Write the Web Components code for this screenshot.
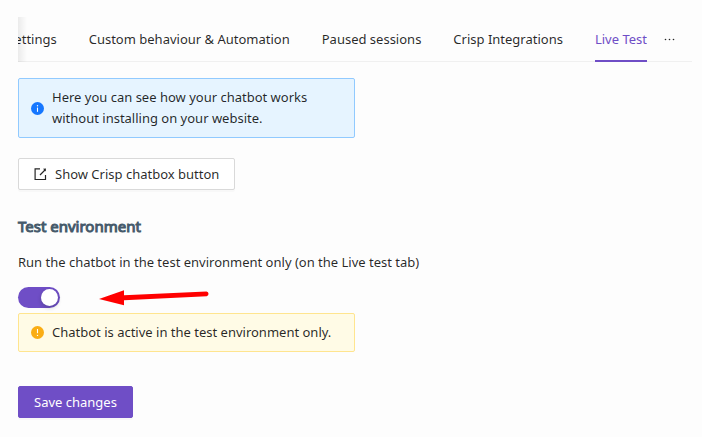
<!DOCTYPE html>
<html lang="en">
<head>
<meta charset="utf-8">
<title>Chatbot settings</title>
<style>
  body { margin: 0; background: #fdfdfd; color: rgba(0,0,0,.85); font: 13px/21px "Noto Sans", "Open Sans", sans-serif; }
</style>
</head>
<body>
<live-test-page></live-test-page>
<script>
class BaseElement extends HTMLElement {
  connectedCallback() {
    if (this.shadowRoot) return;
    this.attachShadow({ mode: 'open' }).innerHTML = this.render();
  }
}

customElements.define('tab-item', class extends BaseElement {
  render() {
    const on = this.hasAttribute('active');
    return `<style>
      :host { display: block; flex: none; }
      button { all: unset; display: block; box-sizing: border-box; height: 45px; padding: 12px 0; line-height: 21px; white-space: nowrap; cursor: pointer; }
      button[aria-selected="true"] { color: #6f4ec6; border-bottom: 2px solid #6f4ec6; }
    </style><button role="tab" aria-selected="${on}"><slot></slot></button>`;
  }
});

customElements.define('tab-bar', class extends BaseElement {
  render() {
    return `<style>
      :host { display: flex; position: relative; background: linear-gradient(#f0f0f0,#f0f0f0) bottom / 100% 1px no-repeat; }
      .list { display: flex; flex: 1; min-width: 0; justify-content: flex-end; gap: 32px; overflow: hidden; }
      .list::before { content: ""; position: absolute; left: 0; top: 0; bottom: 0; width: 9px; background: linear-gradient(to right, rgba(0,0,0,.07), rgba(0,0,0,0)); }
      .more { all: unset; box-sizing: border-box; width: 45px; padding-left: 16px; display: flex; align-items: center; cursor: pointer; }
      svg { display: block; }
    </style>
    <div class="list" role="tablist"><slot></slot></div>
    <button class="more" aria-label="More tabs"><svg width="13" height="13" viewBox="0 0 13 13" fill="#262626"><circle cx="2.500" cy="6.5" r=".8"/><circle cx="6.5" cy="6.5" r=".8"/><circle cx="10.500" cy="6.5" r=".8"/></svg></button>`;
  }
});

customElements.define('alert-box', class extends BaseElement {
  render() {
    const warn = this.getAttribute('type') === 'warning';
    const mark = warn
      ? '<path d="M6.5 3v4.2" stroke="#fff" stroke-width="1.1"/><circle cx="6.5" cy="9.4" r=".7" fill="#fff"/>'
      : '<path d="M6.5 5.6v4.2" stroke="#fff" stroke-width="1.1"/><circle cx="6.5" cy="3.7" r=".7" fill="#fff"/>';
    return `<style>
      :host { display: flex; align-items: center; gap: 8px; box-sizing: border-box; max-width: 337px; padding: 8px 12px; border: 1px solid #91caff; border-radius: 2px; background: #e6f4ff; color: #1677ff; }
      :host([type="warning"]) { border-color: #ffe58f; background: #fffbe6; color: #faad14; }
      svg { flex: none; }
      div { flex: 1; color: rgba(0,0,0,.85); }
    </style><svg width="13" height="13" viewBox="0 0 13 13" aria-hidden="true"><circle cx="6.5" cy="6.5" r="6.5" fill="currentColor"/>${mark}</svg><div><slot></slot></div>`;
  }
});

customElements.define('action-button', class extends BaseElement {
  render() {
    return `<style>
      :host { display: block; }
      button { display: flex; align-items: center; gap: 8px; height: 32px; padding: 0 15px; border: 1px solid #d9d9d9; border-radius: 2px; background: #fff; color: inherit; font: inherit; box-shadow: 0 2px 0 rgba(0,0,0,.02); cursor: pointer; }
      :host([primary]) button { background: #6f4ec6; border-color: #6f4ec6; color: #fff; }
    </style><button type="button"><slot name="icon"></slot><span><slot></slot></span></button>`;
  }
});

customElements.define('toggle-switch', class extends BaseElement {
  render() {
    return `<style>
      :host { display: block; }
      label { display: grid; gap: 14px; }
      input { appearance: none; box-sizing: border-box; display: flex; width: 42px; height: 21px; margin: 0; padding: 2px; border-radius: 11px; background: #bfbfbf; cursor: pointer; }
      input::before { content: ""; width: 17px; height: 17px; border-radius: 50%; background: #fff; box-shadow: 0 2px 4px rgba(0,35,11,.2); }
      input:checked { background: #6f4ec6; justify-content: flex-end; }
    </style><label><span><slot></slot></span><input type="checkbox" role="switch" checked></label>`;
  }
});

customElements.define('pointer-arrow', class extends BaseElement {
  render() {
    return `<style>
      :host { position: absolute; left: 81px; bottom: 1px; pointer-events: none; }
      svg { display: block; }
    </style><svg width="112" height="18" viewBox="0 0 112 18" fill="#f00" aria-hidden="true"><path d="M0 10 25 1.3V6.3L107.500 2.600A2.400 2.400 0 0 1 107.700 7.300L25 11.200V16.200Z"/></svg>`;
  }
});

customElements.define('live-test-page', class extends BaseElement {
  render() {
    return `<style>
      :host { display: block; padding: 17px 10px 19px 18px; }
      tab-bar { margin-bottom: 16px; }
      .open { margin: 20px 0 24px; }
      h3 { margin: 0 0 14px; font-size: 15px; line-height: 24px; font-weight: 400; color: #455a6b; -webkit-text-stroke: 1px #455a6b; }
      .setting { position: relative; margin-bottom: 5px; }
      .save { margin-top: 34px; }
      svg { display: block; }
    </style>
    <tab-bar>
      <tab-item>Settings</tab-item>
      <tab-item>Custom behaviour &amp; Automation</tab-item>
      <tab-item>Paused sessions</tab-item>
      <tab-item>Crisp Integrations</tab-item>
      <tab-item active>Live Test</tab-item>
    </tab-bar>
    <alert-box>Here you can see how your chatbot works without installing on your website.</alert-box>
    <action-button class="open"><svg slot="icon" width="13" height="13" viewBox="0 0 13 13" fill="none" stroke="#262626" stroke-width="1.2" aria-hidden="true"><path d="M6 .9H1.100V11.500H11.500V7M6 7 11 2"/><path d="M9 .8 12 .5 11.700 3.500Z" fill="#262626" stroke="none"/></svg>Show Crisp chatbox button</action-button>
    <h3>Test environment</h3>
    <div class="setting">
      <toggle-switch>Run the chatbot in the test environment only (on the Live test tab)</toggle-switch>
      <pointer-arrow></pointer-arrow>
    </div>
    <alert-box type="warning">Chatbot is active in the test environment only.</alert-box>
    <action-button primary class="save">Save changes</action-button>`;
  }
});
</script>
</body>
</html>
